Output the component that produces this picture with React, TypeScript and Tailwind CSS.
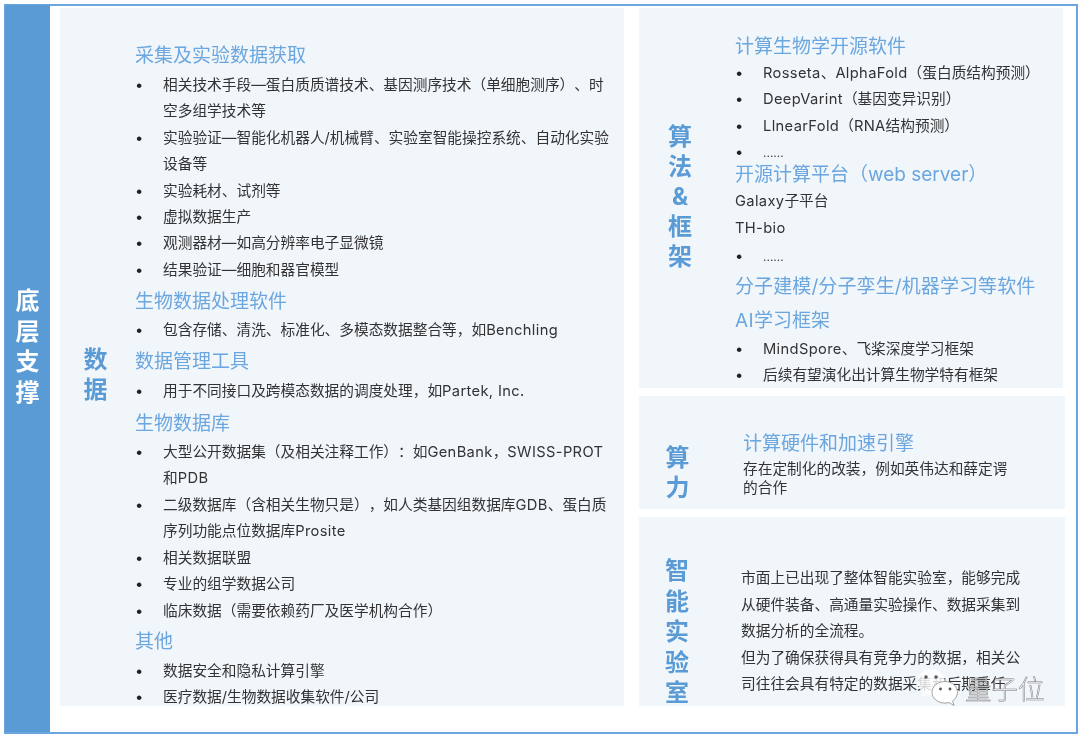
import React from "react";

const cjk = "font-['Inter','Noto_Sans_CJK_SC',sans-serif] [text-spacing-trim:space-all]";

function Head({ children, className = "" }: { children: React.ReactNode; className?: string }) {
  return <div className={`text-[19px] leading-[26px] text-[#6ba6de] ${className}`}>{children}</div>;
}

// latin words run a little wider than Inter in the picture
function Lat({ children }: { children: React.ReactNode }) {
  return <span className="tracking-[0.35px]">{children}</span>;
}

function Item({ children }: { children: React.ReactNode }) {
  return (
    <div className="flex text-[14.7px] leading-[26.4px] text-[#333333]">
      <span className="w-[28px] shrink-0 text-[#222222]">•</span>
      <div>{children}</div>
    </div>
  );
}

function Dots() {
  return (
    <Item>
      <span className="text-[12px]">......</span>
    </Item>
  );
}

function Title({ chars, className = "" }: { chars: string[]; className?: string }) {
  return (
    <div className={`flex flex-col items-center font-bold text-[24px] text-[#5b9bd5] ${className}`}>
      {chars.map((c) => (
        <span key={c}>{c}</span>
      ))}
    </div>
  );
}

function DataPanel() {
  return (
    <div className="w-[564px] h-[698px] bg-[#f1f6fb] flex mt-[2px]">
      <Title chars={["数", "据"]} className="w-[71px] mr-[4px] pt-[337px] leading-[29.5px]" />
      <div className="pt-[35px]">
        <Head>采集及实验数据获取</Head>
        <div className="mt-[3px]">
          <Item>
            相关技术手段—蛋白质质谱技术、基因测序技术（单细胞测序）、时
            <br />
            空多组学技术等
          </Item>
          <Item>
            实验验证—智能化机器人/机械臂、实验室智能操控系统、自动化实验
            <br />
            设备等
          </Item>
          <Item>实验耗材、试剂等</Item>
          <Item>虚拟数据生产</Item>
          <Item>观测器材—如高分辨率电子显微镜</Item>
          <Item>结果验证—细胞和器官模型</Item>
        </div>
        <Head className="mt-[6px]">生物数据处理软件</Head>
        <div className="mt-[2px]">
          <Item>
            包含存储、清洗、标准化、多模态数据整合等，如<Lat>Benchling</Lat>
          </Item>
        </div>
        <Head className="mt-[5px]">数据管理工具</Head>
        <div className="mt-[3px]">
          <Item>
            用于不同接口及跨模态数据的调度处理，如<Lat>Partek, Inc.</Lat>
          </Item>
        </div>
        <Head className="mt-[7px]">生物数据库</Head>
        <div className="mt-[2px]">
          <Item>
            大型公开数据集（及相关注释工作）：如<Lat>GenBank</Lat>，<Lat>SWISS-PROT</Lat>
            <br />
            和<Lat>PDB</Lat>
          </Item>
          <Item>
            二级数据库（含相关生物只是），如人类基因组数据库<Lat>GDB</Lat>、蛋白质
            <br />
            序列功能点位数据库<Lat>Prosite</Lat>
          </Item>
          <Item>相关数据联盟</Item>
          <Item>专业的组学数据公司</Item>
          <Item>临床数据（需要依赖药厂及医学机构合作）</Item>
        </div>
        <Head className="mt-[5px]">其他</Head>
        <div className="mt-[3px]">
          <Item>数据安全和隐私计算引擎</Item>
          <Item>医疗数据/生物数据收集软件/公司</Item>
        </div>
      </div>
    </div>
  );
}

function AlgoPanel() {
  return (
    <div className="h-[380px] w-[424px] bg-[#f1f6fb] flex">
      <Title chars={["算", "法", "&", "框", "架"]} className="w-[82px] mr-[14px] pt-[114px] leading-[30px]" />
      <div className="pt-[26px]">
        <Head>计算生物学开源软件</Head>
        <Item>
          <Lat>Rosseta</Lat>、<Lat>AlphaFold</Lat>（蛋白质结构预测）
        </Item>
        <Item>
          <Lat>DeepVarint</Lat>（基因变异识别）
        </Item>
        <Item>
          <Lat>LlnearFold</Lat>（<Lat>RNA</Lat>结构预测）
        </Item>
        <Dots />
        <Head className="-mt-[5px]">开源计算平台（web server）</Head>
        <div className="text-[14.7px] leading-[27px] text-[#333333]">
          <div>
            <Lat>Galaxy</Lat>子平台
          </div>
          <div>
            <Lat>TH-bio</Lat>
          </div>
        </div>
        <div className="mt-[1px]">
          <Dots />
        </div>
        <Head className="mt-[4px] tracking-[0.1px]">分子建模/分子孪生/机器学习等软件</Head>
        <Head className="mt-[8px]">
          <Lat>AI</Lat>学习框架
        </Head>
        <div className="mt-[2px]">
          <Item>
            <Lat>MindSpore</Lat>、飞桨深度学习框架
          </Item>
          <Item>后续有望演化出计算生物学特有框架</Item>
        </div>
      </div>
    </div>
  );
}

function ComputePanel() {
  return (
    <div className="h-[113px] w-[426px] bg-[#f1f6fb] flex">
      <Title chars={["算", "力"]} className="w-[77px] pt-[47px] leading-[30px]" />
      <div className="pt-[35px] pl-[27px]">
        <Head>计算硬件和加速引擎</Head>
        <div className="mt-[3px] text-[14.7px] leading-[19px] text-[#333333]">
          存在定制化的改装，例如英伟达和薛定谔
          <br />
          的合作
        </div>
      </div>
    </div>
  );
}

function LabPanel() {
  return (
    <div className="h-[189px] w-[426px] bg-[#f1f6fb] flex overflow-hidden">
      <Title chars={["智", "能", "实", "验", "室"]} className="w-[76px] pt-[39px] leading-[30.5px]" />
      <div className="pt-[48px] pl-[26px] text-[14.7px] leading-[26.5px] text-[#333333]">
        市面上已出现了整体智能实验室，能够完成
        <br />
        从硬件装备、高通量实验操作、数据采集到
        <br />
        数据分析的全流程。
        <br />
        但为了确保获得具有竞争力的数据，相关公
        <br />
        司往往会具有特定的数据采集和后期重任
      </div>
    </div>
  );
}

function Watermark() {
  return (
    <div className="absolute left-[917px] top-[668px] flex items-start gap-[6px]">
      <svg width="42" height="38" viewBox="0 0 42 38" fill="none">
        <path
          d="M14 1C6.300 1 0.500 6.700 0.500 13.800c0 4.200 2.100 7.800 5.400 10.100L4 29.500l6.200-3.100c1.200.3 2.500.4 3.800.4 7.700 0 14-5.800 14-13C28 6.700 21.700 1 14 1z"
          fill="#ffffff"
          fillOpacity="0.8"
        />
        <path
          d="M28 13.500c-7.200 0-13 4.800-13 10.800s5.800 10.800 13 10.800c1.400 0 2.700-.2 4-.6l5 3-1.400-4.700c3-2 4.900-5 4.900-8.500 0-6-5.300-10.800-12.500-10.800z"
          fill="#ffffff"
          stroke="#9a9a9a"
          strokeWidth="0.9"
        />
        <circle cx="9" cy="9" r="1.700" fill="#555555" />
        <circle cx="19" cy="9" r="1.700" fill="#555555" />
        <circle cx="23.500" cy="21" r="1.400" fill="#555555" />
        <circle cx="33" cy="21" r="1.400" fill="#555555" />
      </svg>
      <span className="mt-[6px] text-[26.5px] leading-[30px] font-light text-white [-webkit-text-stroke:0.5px_#777777]">
        量子位
      </span>
    </div>
  );
}

export default function App() {
  return (
    <div className={`relative w-[1080px] h-[736px] bg-white overflow-hidden blur-[0.3px] ${cjk}`}>
      <div className="ml-[4px] mt-[4px] w-[1074px] h-[730px] border-2 border-[#6ba6de] flex">
        <div className="w-[45px] -mt-[1px] -ml-[1px] bg-[#5b9bd5] flex flex-col items-center pt-[281px] font-bold text-[24px] leading-[30.6px] text-white">
          <span>底</span>
          <span>层</span>
          <span>支</span>
          <span>撑</span>
        </div>
        <div className="ml-[10px]">
          <DataPanel />
        </div>
        <div className="ml-[15px] mt-[2px] flex flex-col gap-[8px]">
          <AlgoPanel />
          <ComputePanel />
          <LabPanel />
        </div>
      </div>
      <Watermark />
    </div>
  );
}
